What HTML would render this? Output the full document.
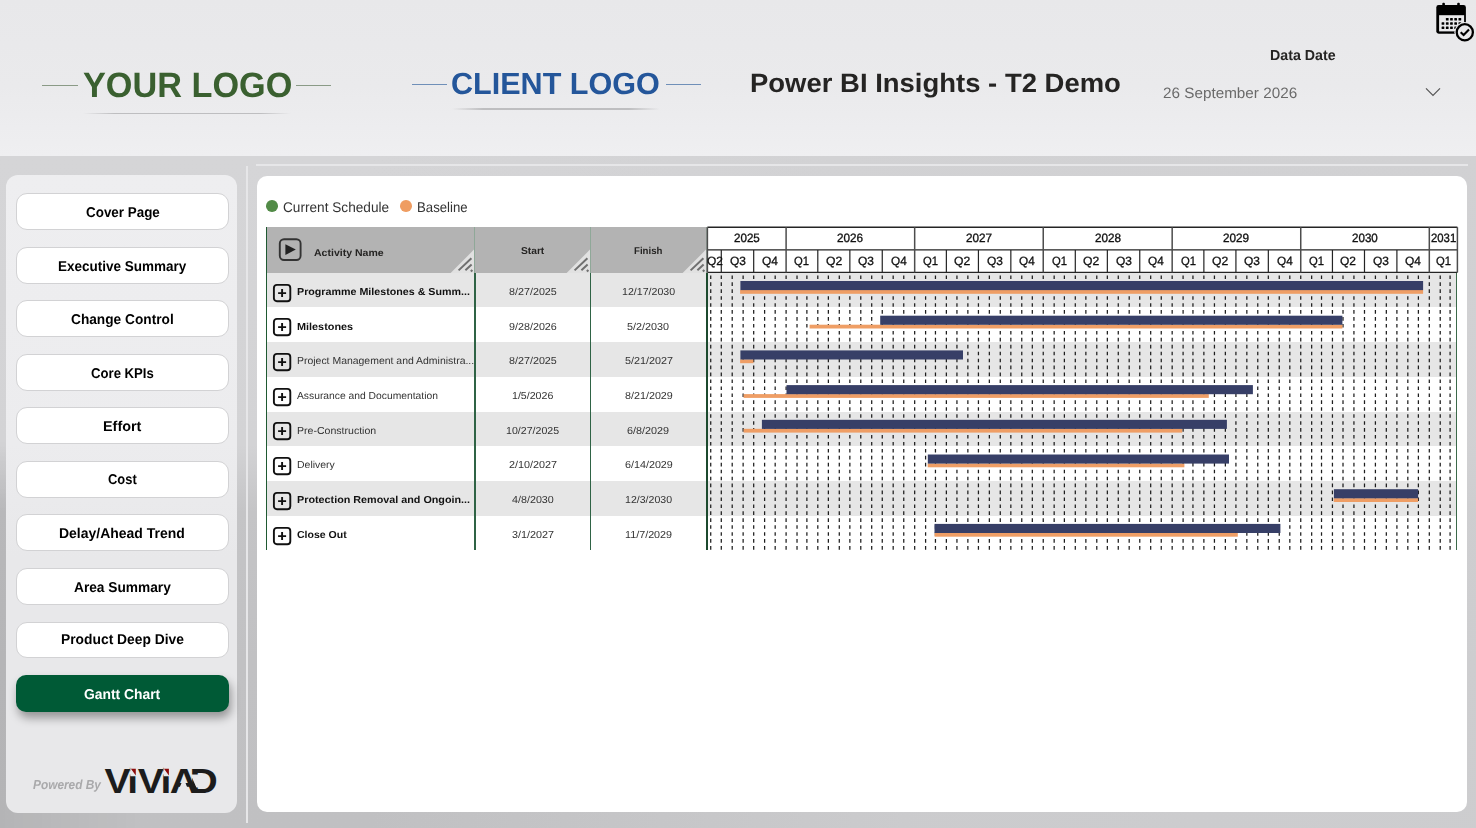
<!DOCTYPE html>
<html lang="en"><head><meta charset="utf-8"><title>Power BI Insights - T2 Demo</title>
<style>
html,body{margin:0;padding:0}
body{width:1476px;height:828px;overflow:hidden;position:relative;background:#d3d3d5;font-family:"Liberation Sans",sans-serif}
.a{position:absolute}
.t{position:absolute;white-space:nowrap;line-height:1;transform-origin:0 50%;letter-spacing:0;text-rendering:geometricPrecision}
#hdr{left:0;top:0;width:1476px;height:156px;background:linear-gradient(180deg,#e8e8ea 0%,#eaeaec 55%,#efeff1 100%)}
#side{left:6.4px;top:175px;width:230.7px;height:637.5px;border-radius:12px;background:linear-gradient(180deg,#eeeef0 0%,#ececee 42%,#e8e8ea 60%,#e8e8ea 100%)}
.btn{left:16.2px;width:210.6px;height:34.5px;border:1px solid #d2d2d4;border-radius:11px;background:#fff}
#panel{left:256.8px;top:175.8px;width:1210.5px;height:636.7px;border-radius:10px;background:#fff}
</style></head><body>

<div class="a" id="bg2" style="left:0;top:156px;width:1476px;height:672px;background:linear-gradient(90deg,rgba(210,210,212,0) 0%,rgba(210,210,212,0) 25%,rgba(208,208,210,.7) 62%,rgba(208,208,210,.8) 100%),linear-gradient(180deg,#d5d5d7 0%,#d3d3d5 43%,#c4c4c6 53%,#c1c1c3 75%,#c0c0c2 100%)"></div>
<div class="a" style="left:0;top:440px;width:140px;height:388px;background:linear-gradient(90deg,rgba(0,0,0,.06) 0,rgba(0,0,0,0) 140px);-webkit-mask-image:linear-gradient(180deg,transparent 0,#000 70px);mask-image:linear-gradient(180deg,transparent 0,#000 70px)"></div>
<div class="a" id="hdr"></div>
<div class="a" style="left:42px;top:84.5px;width:35.7px;height:1px;background:#8a9a86"></div>
<div class="a" style="left:296.2px;top:84.5px;width:34.8px;height:1px;background:#8a9a86"></div>
<div class="a" style="left:83px;top:112.6px;width:208px;height:1.6px;background:linear-gradient(90deg,rgba(190,190,192,0),rgba(190,190,192,1) 15%,rgba(190,190,192,1) 85%,rgba(190,190,192,0))"></div>
<div class="a" style="left:412px;top:83.8px;width:34.6px;height:1px;background:#6f8fb8"></div>
<div class="a" style="left:666.2px;top:83.8px;width:34.8px;height:1px;background:#6f8fb8"></div>
<div class="a" style="left:452px;top:108.2px;width:208px;height:1.6px;background:linear-gradient(90deg,rgba(190,190,192,0),rgba(190,190,192,1) 15%,rgba(190,190,192,1) 85%,rgba(190,190,192,0))"></div>
<svg class="a" style="left:1424px;top:86px" width="18" height="12" viewBox="0 0 18 12"><path d="M2 2.3 L9 9.3 L16 2.3" fill="none" stroke="#555" stroke-width="1.2"/></svg>
<svg class="a" style="left:1434px;top:0px" width="42" height="44" viewBox="0 0 42 44">
<rect x="2.3" y="5" width="29.6" height="28.7" rx="2.4" fill="#000"/>
<rect x="5.1" y="15.2" width="25" height="16.2" fill="#e9e9eb"/>
<rect x="8.3" y="2.8" width="2.6" height="4" rx="1" fill="#000"/><rect x="23.2" y="2.8" width="2.6" height="4" rx="1" fill="#000"/>
<g fill="#000">
<rect x="11.9" y="17.9" width="2.7" height="2.6" rx=".5"/><rect x="16.1" y="17.9" width="2.7" height="2.6" rx=".5"/><rect x="20.3" y="17.9" width="2.7" height="2.6" rx=".5"/><rect x="24.5" y="17.9" width="2.7" height="2.6" rx=".5"/>
<rect x="7.6" y="22.2" width="2.7" height="2.6" rx=".5"/><rect x="11.9" y="22.2" width="2.7" height="2.6" rx=".5"/><rect x="16.1" y="22.2" width="2.7" height="2.6" rx=".5"/><rect x="20.3" y="22.2" width="2.7" height="2.6" rx=".5"/><rect x="24.5" y="22.2" width="2.7" height="2.6" rx=".5"/>
<rect x="7.6" y="26.4" width="2.7" height="2.6" rx=".5"/><rect x="11.9" y="26.4" width="2.7" height="2.6" rx=".5"/><rect x="16.1" y="26.4" width="2.7" height="2.6" rx=".5"/><rect x="20.3" y="26.4" width="2.7" height="2.6" rx=".5"/>
</g>
<circle cx="30.8" cy="32.3" r="10.4" fill="#e9e9eb"/>
<circle cx="30.8" cy="32.3" r="8.1" fill="#e9e9eb" stroke="#000" stroke-width="2.3"/>
<path d="M26.7 32.3 L29.6 35.1 L35 29.5" fill="none" stroke="#000" stroke-width="2.1"/>
</svg>
<div class="a" style="left:245.7px;top:166px;width:2px;height:657px;background:#e6e6e8"></div>
<div class="a" style="left:256px;top:164.2px;width:1212px;height:2.2px;background:#e6e6e8"></div>
<div class="a" id="side"></div>
<div class="a btn" style="top:193.3px"></div>
<div class="a btn" style="top:247.2px"></div>
<div class="a btn" style="top:300.4px"></div>
<div class="a btn" style="top:354.3px"></div>
<div class="a btn" style="top:407.4px"></div>
<div class="a btn" style="top:461.4px"></div>
<div class="a btn" style="top:514.3px"></div>
<div class="a btn" style="top:568.4px"></div>
<div class="a btn" style="top:621.5px"></div>
<div class="a" style="left:16.1px;top:674.9px;width:213.1px;height:36.8px;border-radius:10px;background:#005a36;box-shadow:2px 6px 10px rgba(0,0,0,.36)"></div>
<svg class="a" style="left:100px;top:760px" width="124" height="40" viewBox="100 760 124 40">
<defs><clipPath id="vclip"><path clip-rule="evenodd" d="M100 760 H224 V800 H100 Z M130.3 765 H136.6 V776.3 H130.3 Z M163.5 765 H169.8 V776.3 H163.5 Z M177.2 793.5 L183.6 778 L189.5 793.5 Z M190.6 774.4 H199.3 V787.6 H196.4 Z"/></clipPath></defs>
<g clip-path="url(#vclip)"><text transform="scale(1.120 1)" x="93.39 113.57 123.04 143.21 151.52 169.29" y="792.8" font-family="Liberation Sans, sans-serif" font-weight="700" font-size="34.9" fill="#1c1c1c" style="text-rendering:geometricPrecision">ViViAD</text></g>
<path d="M130.9 768.8 H135.8 V775.6 Z M164 768.8 H168.9 V775.6 Z" fill="#8c0a0a"/>
</svg>
<div class="a" id="panel"></div>
<div class="a" style="left:266.1px;top:200.3px;width:11.6px;height:11.6px;border-radius:50%;background:#528b47"></div>
<div class="a" style="left:400.2px;top:200.3px;width:11.6px;height:11.6px;border-radius:50%;background:#ef9d62"></div>
<div class="a" style="left:267px;top:226.6px;width:439.5px;height:46.1px;background:#b3b3b3"></div>
<div class="a" style="left:267px;top:272.7px;width:1190px;height:34.7px;background:#e6e6e6"></div>
<div class="a" style="left:267px;top:342.1px;width:1190px;height:34.7px;background:#e6e6e6"></div>
<div class="a" style="left:267px;top:411.5px;width:1190px;height:34.7px;background:#e6e6e6"></div>
<div class="a" style="left:267px;top:480.9px;width:1190px;height:34.7px;background:#e6e6e6"></div>
<svg class="a" style="left:449.9px;top:248.7px" width="24" height="24" viewBox="0 0 24 24"><path d="M24 0.6 L24 24 L0.6 24 Z" fill="#e1e1e1"/><path d="M8.6 21.4 L21.4 9.2 M15.4 21.2 L21.6 15.4" stroke="#707070" stroke-width="2" fill="none"/><path d="M21.6 20.2 l1.5 1.5 l-1.5 1.5 l-1.5 -1.5 Z" fill="#707070"/></svg>
<svg class="a" style="left:565.8px;top:248.7px" width="24" height="24" viewBox="0 0 24 24"><path d="M24 0.6 L24 24 L0.6 24 Z" fill="#e1e1e1"/><path d="M8.6 21.4 L21.4 9.2 M15.4 21.2 L21.6 15.4" stroke="#707070" stroke-width="2" fill="none"/><path d="M21.6 20.2 l1.5 1.5 l-1.5 1.5 l-1.5 -1.5 Z" fill="#707070"/></svg>
<svg class="a" style="left:681.7px;top:248.7px" width="24" height="24" viewBox="0 0 24 24"><path d="M24 0.6 L24 24 L0.6 24 Z" fill="#e1e1e1"/><path d="M8.6 21.4 L21.4 9.2 M15.4 21.2 L21.6 15.4" stroke="#707070" stroke-width="2" fill="none"/><path d="M21.6 20.2 l1.5 1.5 l-1.5 1.5 l-1.5 -1.5 Z" fill="#707070"/></svg>
<div class="a" style="left:265.9px;top:226.6px;width:1.3px;height:323.7px;background:#1f5a32"></div>
<div class="a" style="left:474.1px;top:226.6px;width:1.4px;height:46.1px;background:#8fa898"></div>
<div class="a" style="left:473.9px;top:272.7px;width:1.7px;height:277.6px;background:#2f6345"></div>
<div class="a" style="left:590.0px;top:226.6px;width:1.4px;height:46.1px;background:#8fa898"></div>
<div class="a" style="left:589.8px;top:272.7px;width:1.7px;height:277.6px;background:#2f6345"></div>
<div class="a" style="left:705.6px;top:226.6px;width:1.2px;height:46.1px;background:#9aa89f"></div>
<div class="a" style="left:705.7px;top:272.7px;width:2px;height:277.6px;background:#1c4a2e"></div>
<div class="a" style="left:1456.4px;top:272.7px;width:1px;height:277.6px;background:#3c6a4a"></div>
<svg class="a" style="left:277px;top:236px" width="27" height="27" viewBox="0 0 27 27"><rect x="2.8" y="3.2" width="20.8" height="20.8" rx="4.2" fill="none" stroke="#333" stroke-width="1.9"/><path d="M8.4 8.2 L18.8 13.6 L8.4 19 Z" fill="#222"/></svg>
<svg class="a" style="left:271px;top:281.6px" width="22" height="22" viewBox="0 0 22 22"><rect x="2.9" y="2.9" width="16.4" height="16.4" rx="3" fill="none" stroke="#111" stroke-width="1.9"/><path d="M7.1 11.1 h8 M11.1 7.1 v8" stroke="#111" stroke-width="1.9" fill="none"/></svg>
<svg class="a" style="left:271px;top:316.3px" width="22" height="22" viewBox="0 0 22 22"><rect x="2.9" y="2.9" width="16.4" height="16.4" rx="3" fill="none" stroke="#111" stroke-width="1.9"/><path d="M7.1 11.1 h8 M11.1 7.1 v8" stroke="#111" stroke-width="1.9" fill="none"/></svg>
<svg class="a" style="left:271px;top:351.0px" width="22" height="22" viewBox="0 0 22 22"><rect x="2.9" y="2.9" width="16.4" height="16.4" rx="3" fill="none" stroke="#111" stroke-width="1.9"/><path d="M7.1 11.1 h8 M11.1 7.1 v8" stroke="#111" stroke-width="1.9" fill="none"/></svg>
<svg class="a" style="left:271px;top:385.7px" width="22" height="22" viewBox="0 0 22 22"><rect x="2.9" y="2.9" width="16.4" height="16.4" rx="3" fill="none" stroke="#111" stroke-width="1.9"/><path d="M7.1 11.1 h8 M11.1 7.1 v8" stroke="#111" stroke-width="1.9" fill="none"/></svg>
<svg class="a" style="left:271px;top:420.4px" width="22" height="22" viewBox="0 0 22 22"><rect x="2.9" y="2.9" width="16.4" height="16.4" rx="3" fill="none" stroke="#111" stroke-width="1.9"/><path d="M7.1 11.1 h8 M11.1 7.1 v8" stroke="#111" stroke-width="1.9" fill="none"/></svg>
<svg class="a" style="left:271px;top:455.1px" width="22" height="22" viewBox="0 0 22 22"><rect x="2.9" y="2.9" width="16.4" height="16.4" rx="3" fill="none" stroke="#111" stroke-width="1.9"/><path d="M7.1 11.1 h8 M11.1 7.1 v8" stroke="#111" stroke-width="1.9" fill="none"/></svg>
<svg class="a" style="left:271px;top:489.8px" width="22" height="22" viewBox="0 0 22 22"><rect x="2.9" y="2.9" width="16.4" height="16.4" rx="3" fill="none" stroke="#111" stroke-width="1.9"/><path d="M7.1 11.1 h8 M11.1 7.1 v8" stroke="#111" stroke-width="1.9" fill="none"/></svg>
<svg class="a" style="left:271px;top:524.5px" width="22" height="22" viewBox="0 0 22 22"><rect x="2.9" y="2.9" width="16.4" height="16.4" rx="3" fill="none" stroke="#111" stroke-width="1.9"/><path d="M7.1 11.1 h8 M11.1 7.1 v8" stroke="#111" stroke-width="1.9" fill="none"/></svg>
<svg class="a" style="left:700px;top:220px" width="776" height="340" viewBox="700 220 776 340" shape-rendering="auto">
<rect x="707.4" y="227.3" width="750.0" height="45.1" fill="#fff"/>
<path d="M710.72 275.4 V550.3 M721.29 275.4 V550.3 M732.21 275.4 V550.3 M743.13 275.4 V550.3 M753.69 275.4 V550.3 M764.61 275.4 V550.3 M775.18 275.4 V550.3 M786.10 275.4 V550.3 M797.02 275.4 V550.3 M806.88 275.4 V550.3 M817.80 275.4 V550.3 M828.37 275.4 V550.3 M839.29 275.4 V550.3 M849.86 275.4 V550.3 M860.78 275.4 V550.3 M871.70 275.4 V550.3 M882.26 275.4 V550.3 M893.18 275.4 V550.3 M903.75 275.4 V550.3 M914.67 275.4 V550.3 M925.59 275.4 V550.3 M935.45 275.4 V550.3 M946.37 275.4 V550.3 M956.94 275.4 V550.3 M967.86 275.4 V550.3 M978.43 275.4 V550.3 M989.35 275.4 V550.3 M1000.27 275.4 V550.3 M1010.84 275.4 V550.3 M1021.76 275.4 V550.3 M1032.32 275.4 V550.3 M1043.24 275.4 V550.3 M1054.16 275.4 V550.3 M1064.38 275.4 V550.3 M1075.30 275.4 V550.3 M1085.86 275.4 V550.3 M1096.78 275.4 V550.3 M1107.35 275.4 V550.3 M1118.27 275.4 V550.3 M1129.19 275.4 V550.3 M1139.76 275.4 V550.3 M1150.68 275.4 V550.3 M1161.25 275.4 V550.3 M1172.17 275.4 V550.3 M1183.09 275.4 V550.3 M1192.95 275.4 V550.3 M1203.87 275.4 V550.3 M1214.44 275.4 V550.3 M1225.36 275.4 V550.3 M1235.92 275.4 V550.3 M1246.84 275.4 V550.3 M1257.76 275.4 V550.3 M1268.33 275.4 V550.3 M1279.25 275.4 V550.3 M1289.82 275.4 V550.3 M1300.74 275.4 V550.3 M1311.66 275.4 V550.3 M1321.52 275.4 V550.3 M1332.44 275.4 V550.3 M1343.01 275.4 V550.3 M1353.93 275.4 V550.3 M1364.49 275.4 V550.3 M1375.41 275.4 V550.3 M1386.33 275.4 V550.3 M1396.90 275.4 V550.3 M1407.82 275.4 V550.3 M1418.39 275.4 V550.3 M1429.31 275.4 V550.3 M1440.23 275.4 V550.3 M1450.09 275.4 V550.3" stroke="#1e1e1e" stroke-width="1.25" stroke-dasharray="3.6 3.34" fill="none"/>
<rect x="740.1" y="290.0" width="683.0" height="3.8" fill="#ef9e65"/>
<rect x="740.4" y="281.0" width="682.7" height="9.1" fill="#373f67"/>
<rect x="809.6" y="324.7" width="532.8" height="3.8" fill="#ef9e65"/>
<rect x="880.2" y="315.7" width="462.2" height="9.1" fill="#373f67"/>
<rect x="740.1" y="359.4" width="13.3" height="3.8" fill="#ef9e65"/>
<rect x="740.4" y="350.4" width="222.6" height="9.1" fill="#373f67"/>
<rect x="743.6" y="394.1" width="465.2" height="3.8" fill="#ef9e65"/>
<rect x="786.5" y="385.1" width="466.4" height="9.1" fill="#373f67"/>
<rect x="743.6" y="428.8" width="438.6" height="3.8" fill="#ef9e65"/>
<rect x="761.9" y="419.8" width="465.0" height="9.1" fill="#373f67"/>
<rect x="927.7" y="463.5" width="256.7" height="3.8" fill="#ef9e65"/>
<rect x="927.8" y="454.5" width="301.2" height="9.1" fill="#373f67"/>
<rect x="1333.8" y="498.2" width="84.3" height="3.8" fill="#ef9e65"/>
<rect x="1333.9" y="489.2" width="84.2" height="9.1" fill="#373f67"/>
<rect x="934.6" y="532.9" width="303.2" height="3.8" fill="#ef9e65"/>
<rect x="934.5" y="523.9" width="345.9" height="9.1" fill="#373f67"/>
<path d="M707.4 227.3 H1457.4 M707.4 249.9 H1457.4 M707.4 272.4 H1457.4" stroke="#242424" stroke-width="1.4" fill="none"/>
<path d="M721.29 249.9 V272.4 M753.69 249.9 V272.4 M817.80 249.9 V272.4 M849.86 249.9 V272.4 M882.26 249.9 V272.4 M946.37 249.9 V272.4 M978.43 249.9 V272.4 M1010.84 249.9 V272.4 M1075.30 249.9 V272.4 M1107.35 249.9 V272.4 M1139.76 249.9 V272.4 M1203.87 249.9 V272.4 M1235.92 249.9 V272.4 M1268.33 249.9 V272.4 M1332.44 249.9 V272.4 M1364.49 249.9 V272.4 M1396.90 249.9 V272.4" stroke="#242424" stroke-width="1.2" fill="none"/>
<path d="M707.40 227.3 V272.4 M786.10 227.3 V272.4 M914.67 227.3 V272.4 M1043.24 227.3 V272.4 M1172.17 227.3 V272.4 M1300.74 227.3 V272.4 M1429.31 227.3 V272.4 M1457.40 227.3 V272.4" stroke="#4d4d4d" stroke-width="1.5" fill="none"/>
</svg>
<div class="t" id="ylogo" style="left:83.12px;top:68.20px;font-size:35.20px;font-weight:700;font-style:normal;color:#3a6030;transform:scaleX(0.9737);">YOUR LOGO</div>
<div class="t" id="clogo" style="left:451.40px;top:69.30px;font-size:30.60px;font-weight:700;font-style:normal;color:#24569a;transform:scaleX(0.9990);">CLIENT LOGO</div>
<div class="t" id="title" style="left:750.33px;top:69.67px;font-size:26.50px;font-weight:700;font-style:normal;color:#252423;transform:scaleX(1.0366);">Power BI Insights - T2 Demo</div>
<div class="t" id="ddate" style="left:1269.56px;top:48.81px;font-size:14.40px;font-weight:700;font-style:normal;color:#252423;transform:scaleX(0.9877);">Data Date</div>
<div class="t" id="dval" style="left:1162.53px;top:86.10px;font-size:15.00px;font-weight:400;font-style:normal;color:#6a6a6a;transform:scaleX(1.0180);">26 September 2026</div>
<div class="t" id="b0" style="left:85.53px;top:205.88px;font-size:14.20px;font-weight:700;font-style:normal;color:#000;transform:scaleX(0.9455);">Cover Page</div>
<div class="t" id="b1" style="left:57.90px;top:259.58px;font-size:14.20px;font-weight:700;font-style:normal;color:#000;transform:scaleX(0.9510);">Executive Summary</div>
<div class="t" id="b2" style="left:71.22px;top:312.78px;font-size:14.20px;font-weight:700;font-style:normal;color:#000;transform:scaleX(0.9652);">Change Control</div>
<div class="t" id="b3" style="left:91.00px;top:366.88px;font-size:14.20px;font-weight:700;font-style:normal;color:#000;transform:scaleX(0.9263);">Core KPIs</div>
<div class="t" id="b4" style="left:102.74px;top:419.58px;font-size:14.20px;font-weight:700;font-style:normal;color:#000;transform:scaleX(1.0150);">Effort</div>
<div class="t" id="b5" style="left:107.85px;top:473.48px;font-size:14.20px;font-weight:700;font-style:normal;color:#000;transform:scaleX(0.9106);">Cost</div>
<div class="t" id="b6" style="left:59.42px;top:526.88px;font-size:14.20px;font-weight:700;font-style:normal;color:#000;transform:scaleX(0.9853);">Delay/Ahead Trend</div>
<div class="t" id="b7" style="left:73.91px;top:580.58px;font-size:14.20px;font-weight:700;font-style:normal;color:#000;transform:scaleX(0.9664);">Area Summary</div>
<div class="t" id="b8" style="left:60.72px;top:633.48px;font-size:14.20px;font-weight:700;font-style:normal;color:#000;transform:scaleX(0.9747);">Product Deep Dive</div>
<div class="t" id="b9" style="left:84.16px;top:687.58px;font-size:14.20px;font-weight:700;font-style:normal;color:#fff;transform:scaleX(0.9761);">Gantt Chart</div>
<div class="t" id="pby" style="left:32.77px;top:778.00px;font-size:13.00px;font-weight:700;font-style:italic;color:#a9a9ab;transform:scaleX(0.9128);">Powered By</div>
<div class="t" id="lg1" style="left:282.77px;top:199.96px;font-size:14.10px;font-weight:400;font-style:normal;color:#333;transform:scaleX(0.9672);">Current Schedule</div>
<div class="t" id="lg2" style="left:417.18px;top:199.96px;font-size:14.10px;font-weight:400;font-style:normal;color:#333;transform:scaleX(0.9359);">Baseline</div>
<div class="t" id="h0" style="left:313.73px;top:249.22px;font-size:9.90px;font-weight:700;font-style:normal;color:#252423;transform:scaleX(1.0656);">Activity Name</div>
<div class="t" id="h1" style="left:520.74px;top:246.52px;font-size:9.90px;font-weight:700;font-style:normal;color:#252423;transform:scaleX(1.0337);">Start</div>
<div class="t" id="h2" style="left:634.02px;top:246.52px;font-size:9.90px;font-weight:700;font-style:normal;color:#252423;transform:scaleX(0.9766);">Finish</div>
<div class="t" id="rn0" style="left:296.71px;top:288.37px;font-size:10.20px;font-weight:700;font-style:normal;color:#111;transform:scaleX(1.0499);">Programme Milestones &amp; Summ...</div>
<div class="t" id="rs0" style="left:508.52px;top:288.37px;font-size:10.20px;font-weight:400;font-style:normal;color:#333;transform:scaleX(1.0551);">8/27/2025</div>
<div class="t" id="rf0" style="left:621.66px;top:288.37px;font-size:10.20px;font-weight:400;font-style:normal;color:#333;transform:scaleX(1.0412);">12/17/2030</div>
<div class="t" id="rn1" style="left:296.70px;top:323.07px;font-size:10.20px;font-weight:700;font-style:normal;color:#111;transform:scaleX(1.0660);">Milestones</div>
<div class="t" id="rs1" style="left:508.52px;top:323.07px;font-size:10.20px;font-weight:400;font-style:normal;color:#333;transform:scaleX(1.0551);">9/28/2026</div>
<div class="t" id="rf1" style="left:627.37px;top:323.07px;font-size:10.20px;font-weight:400;font-style:normal;color:#333;transform:scaleX(1.0606);">5/2/2030</div>
<div class="t" id="rn2" style="left:296.73px;top:356.77px;font-size:10.20px;font-weight:400;font-style:normal;color:#333;transform:scaleX(1.0257);">Project Management and Administra...</div>
<div class="t" id="rs2" style="left:508.52px;top:356.77px;font-size:10.20px;font-weight:400;font-style:normal;color:#333;transform:scaleX(1.0551);">8/27/2025</div>
<div class="t" id="rf2" style="left:624.52px;top:356.77px;font-size:10.20px;font-weight:400;font-style:normal;color:#333;transform:scaleX(1.0610);">5/21/2027</div>
<div class="t" id="rn3" style="left:296.80px;top:392.47px;font-size:10.20px;font-weight:400;font-style:normal;color:#333;transform:scaleX(1.0116);">Assurance and Documentation</div>
<div class="t" id="rs3" style="left:511.62px;top:392.47px;font-size:10.20px;font-weight:400;font-style:normal;color:#333;transform:scaleX(1.0416);">1/5/2026</div>
<div class="t" id="rf3" style="left:624.52px;top:392.47px;font-size:10.20px;font-weight:400;font-style:normal;color:#333;transform:scaleX(1.0551);">8/21/2029</div>
<div class="t" id="rn4" style="left:296.72px;top:427.17px;font-size:10.20px;font-weight:400;font-style:normal;color:#333;transform:scaleX(1.0360);">Pre-Construction</div>
<div class="t" id="rs4" style="left:505.66px;top:427.17px;font-size:10.20px;font-weight:400;font-style:normal;color:#333;transform:scaleX(1.0412);">10/27/2025</div>
<div class="t" id="rf4" style="left:627.37px;top:427.17px;font-size:10.20px;font-weight:400;font-style:normal;color:#333;transform:scaleX(1.0606);">6/8/2029</div>
<div class="t" id="rn5" style="left:296.73px;top:460.87px;font-size:10.20px;font-weight:400;font-style:normal;color:#333;transform:scaleX(1.0278);">Delivery</div>
<div class="t" id="rs5" style="left:508.52px;top:460.87px;font-size:10.20px;font-weight:400;font-style:normal;color:#333;transform:scaleX(1.0610);">2/10/2027</div>
<div class="t" id="rf5" style="left:624.52px;top:460.87px;font-size:10.20px;font-weight:400;font-style:normal;color:#333;transform:scaleX(1.0551);">6/14/2029</div>
<div class="t" id="rn6" style="left:296.71px;top:495.57px;font-size:10.20px;font-weight:700;font-style:normal;color:#111;transform:scaleX(1.0582);">Protection Removal and Ongoin...</div>
<div class="t" id="rs6" style="left:511.63px;top:495.57px;font-size:10.20px;font-weight:400;font-style:normal;color:#333;transform:scaleX(1.0538);">4/8/2030</div>
<div class="t" id="rf6" style="left:624.77px;top:495.57px;font-size:10.20px;font-weight:400;font-style:normal;color:#333;transform:scaleX(1.0384);">12/3/2030</div>
<div class="t" id="rn7" style="left:296.98px;top:531.27px;font-size:10.20px;font-weight:700;font-style:normal;color:#111;transform:scaleX(1.0337);">Close Out</div>
<div class="t" id="rs7" style="left:511.63px;top:531.27px;font-size:10.20px;font-weight:400;font-style:normal;color:#333;transform:scaleX(1.0606);">3/1/2027</div>
<div class="t" id="rf7" style="left:624.75px;top:531.27px;font-size:10.20px;font-weight:400;font-style:normal;color:#333;transform:scaleX(1.0563);">11/7/2029</div>
<div class="t" id="y2025" style="left:733.81px;top:231.76px;font-size:12.10px;font-weight:400;font-style:normal;color:#111;transform:scaleX(0.9600);-webkit-text-stroke:0.35px #111;">2025</div>
<div class="t" id="y2026" style="left:837.34px;top:231.76px;font-size:12.10px;font-weight:400;font-style:normal;color:#111;transform:scaleX(0.9692);-webkit-text-stroke:0.35px #111;">2026</div>
<div class="t" id="y2027" style="left:965.98px;top:231.76px;font-size:12.10px;font-weight:400;font-style:normal;color:#111;transform:scaleX(0.9692);-webkit-text-stroke:0.35px #111;">2027</div>
<div class="t" id="y2028" style="left:1094.72px;top:231.76px;font-size:12.10px;font-weight:400;font-style:normal;color:#111;transform:scaleX(0.9692);-webkit-text-stroke:0.35px #111;">2028</div>
<div class="t" id="y2029" style="left:1223.46px;top:231.76px;font-size:12.10px;font-weight:400;font-style:normal;color:#111;transform:scaleX(0.9692);-webkit-text-stroke:0.35px #111;">2029</div>
<div class="t" id="y2030" style="left:1352.11px;top:231.76px;font-size:12.10px;font-weight:400;font-style:normal;color:#111;transform:scaleX(0.9600);-webkit-text-stroke:0.35px #111;">2030</div>
<div class="t" id="y2031" style="left:1430.83px;top:231.76px;font-size:12.10px;font-weight:400;font-style:normal;color:#111;transform:scaleX(0.9385);-webkit-text-stroke:0.35px #111;">2031</div>
<div class="t" id="q0" style="left:707.20px;top:254.74px;font-size:12.00px;font-weight:400;font-style:normal;color:#111;transform:scaleX(0.9967);-webkit-text-stroke:0.3px #111;">Q2</div>
<div class="t" id="q1" style="left:729.53px;top:254.74px;font-size:12.00px;font-weight:400;font-style:normal;color:#111;transform:scaleX(0.9967);-webkit-text-stroke:0.3px #111;">Q3</div>
<div class="t" id="q2" style="left:761.85px;top:254.74px;font-size:12.00px;font-weight:400;font-style:normal;color:#111;transform:scaleX(0.9967);-webkit-text-stroke:0.3px #111;">Q4</div>
<div class="t" id="q3" style="left:794.38px;top:254.74px;font-size:12.00px;font-weight:400;font-style:normal;color:#111;transform:scaleX(0.9377);-webkit-text-stroke:0.3px #111;">Q1</div>
<div class="t" id="q4" style="left:825.70px;top:254.74px;font-size:12.00px;font-weight:400;font-style:normal;color:#111;transform:scaleX(1.0133);-webkit-text-stroke:0.3px #111;">Q2</div>
<div class="t" id="q5" style="left:858.17px;top:254.74px;font-size:12.00px;font-weight:400;font-style:normal;color:#111;transform:scaleX(0.9967);-webkit-text-stroke:0.3px #111;">Q3</div>
<div class="t" id="q6" style="left:890.50px;top:254.74px;font-size:12.00px;font-weight:400;font-style:normal;color:#111;transform:scaleX(0.9806);-webkit-text-stroke:0.3px #111;">Q4</div>
<div class="t" id="q7" style="left:923.02px;top:254.74px;font-size:12.00px;font-weight:400;font-style:normal;color:#111;transform:scaleX(0.9377);-webkit-text-stroke:0.3px #111;">Q1</div>
<div class="t" id="q8" style="left:954.35px;top:254.74px;font-size:12.00px;font-weight:400;font-style:normal;color:#111;transform:scaleX(1.0133);-webkit-text-stroke:0.3px #111;">Q2</div>
<div class="t" id="q9" style="left:986.56px;top:254.74px;font-size:12.00px;font-weight:400;font-style:normal;color:#111;transform:scaleX(0.9967);-webkit-text-stroke:0.3px #111;">Q3</div>
<div class="t" id="q10" style="left:1019.14px;top:254.74px;font-size:12.00px;font-weight:400;font-style:normal;color:#111;transform:scaleX(0.9806);-webkit-text-stroke:0.3px #111;">Q4</div>
<div class="t" id="q11" style="left:1051.76px;top:254.74px;font-size:12.00px;font-weight:400;font-style:normal;color:#111;transform:scaleX(0.9377);-webkit-text-stroke:0.3px #111;">Q1</div>
<div class="t" id="q12" style="left:1083.19px;top:254.74px;font-size:12.00px;font-weight:400;font-style:normal;color:#111;transform:scaleX(1.0133);-webkit-text-stroke:0.3px #111;">Q2</div>
<div class="t" id="q13" style="left:1115.67px;top:254.74px;font-size:12.00px;font-weight:400;font-style:normal;color:#111;transform:scaleX(0.9967);-webkit-text-stroke:0.3px #111;">Q3</div>
<div class="t" id="q14" style="left:1147.98px;top:254.74px;font-size:12.00px;font-weight:400;font-style:normal;color:#111;transform:scaleX(0.9806);-webkit-text-stroke:0.3px #111;">Q4</div>
<div class="t" id="q15" style="left:1180.51px;top:254.74px;font-size:12.00px;font-weight:400;font-style:normal;color:#111;transform:scaleX(0.9377);-webkit-text-stroke:0.3px #111;">Q1</div>
<div class="t" id="q16" style="left:1211.84px;top:254.74px;font-size:12.00px;font-weight:400;font-style:normal;color:#111;transform:scaleX(1.0133);-webkit-text-stroke:0.3px #111;">Q2</div>
<div class="t" id="q17" style="left:1244.06px;top:254.74px;font-size:12.00px;font-weight:400;font-style:normal;color:#111;transform:scaleX(0.9967);-webkit-text-stroke:0.3px #111;">Q3</div>
<div class="t" id="q18" style="left:1276.62px;top:254.74px;font-size:12.00px;font-weight:400;font-style:normal;color:#111;transform:scaleX(0.9806);-webkit-text-stroke:0.3px #111;">Q4</div>
<div class="t" id="q19" style="left:1309.15px;top:254.74px;font-size:12.00px;font-weight:400;font-style:normal;color:#111;transform:scaleX(0.9377);-webkit-text-stroke:0.3px #111;">Q1</div>
<div class="t" id="q20" style="left:1340.49px;top:254.74px;font-size:12.00px;font-weight:400;font-style:normal;color:#111;transform:scaleX(0.9967);-webkit-text-stroke:0.3px #111;">Q2</div>
<div class="t" id="q21" style="left:1372.70px;top:254.74px;font-size:12.00px;font-weight:400;font-style:normal;color:#111;transform:scaleX(0.9967);-webkit-text-stroke:0.3px #111;">Q3</div>
<div class="t" id="q22" style="left:1405.02px;top:254.74px;font-size:12.00px;font-weight:400;font-style:normal;color:#111;transform:scaleX(0.9967);-webkit-text-stroke:0.3px #111;">Q4</div>
<div class="t" id="q23" style="left:1435.92px;top:254.74px;font-size:12.00px;font-weight:400;font-style:normal;color:#111;transform:scaleX(0.9377);-webkit-text-stroke:0.3px #111;">Q1</div>
</body></html>
